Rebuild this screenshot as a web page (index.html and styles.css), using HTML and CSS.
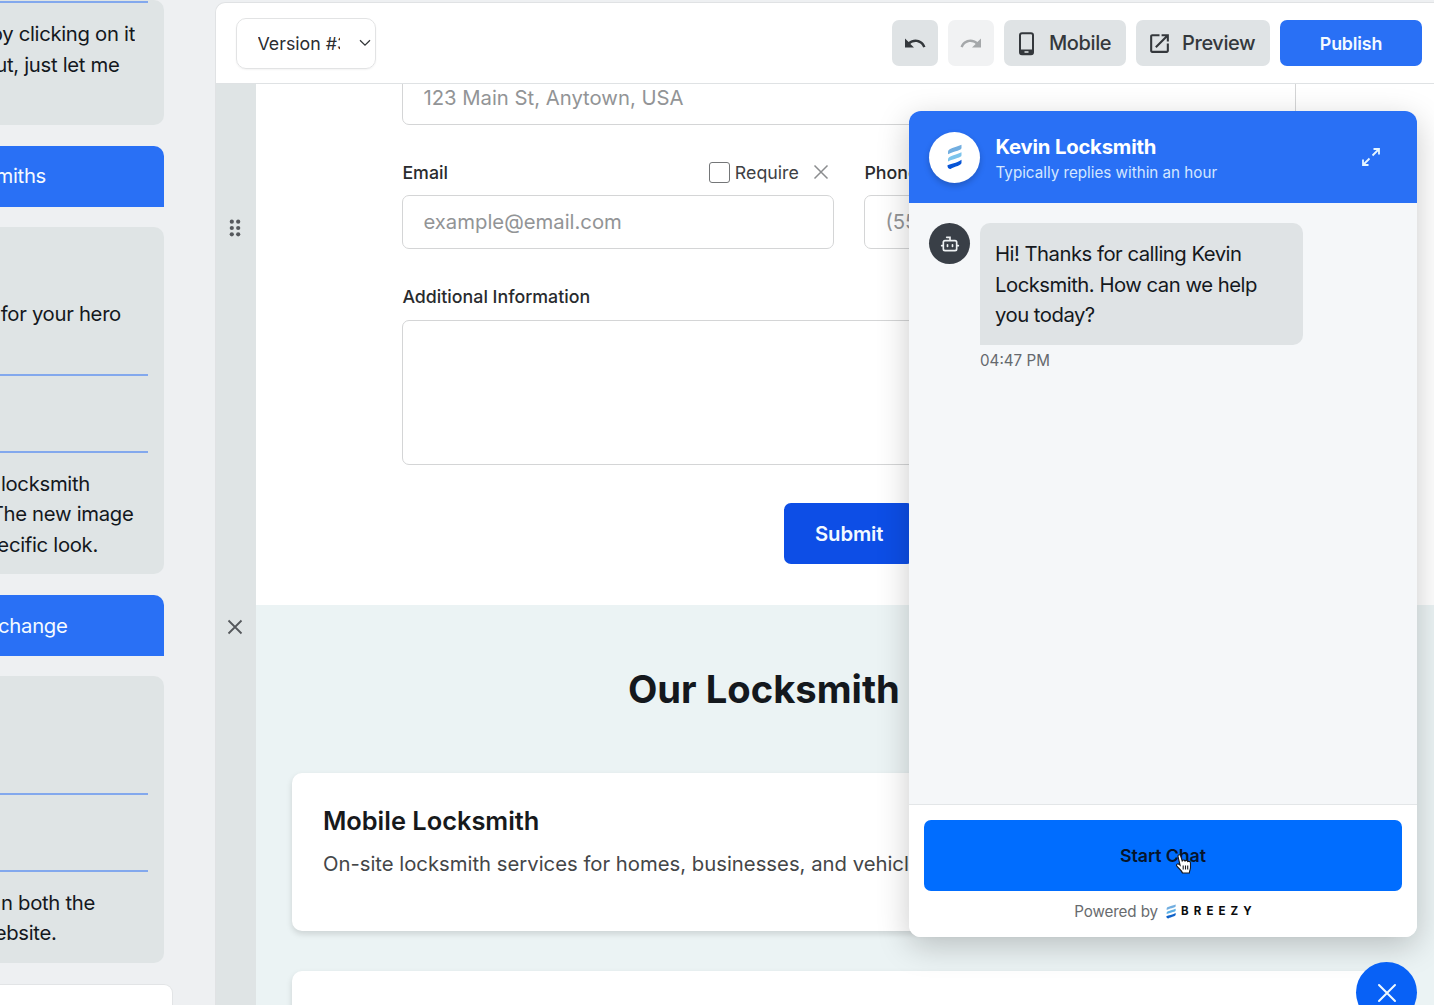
FILE: index.html
```html
<!DOCTYPE html>
<html lang="en">
<head>
<meta charset="utf-8">
<title>Website editor</title>
<link rel="stylesheet" href="styles.css">
</head>
<body>
<div class="app">
  <aside class="assistant">
    <div class="bubble bubble-a">
      <hr class="rule">
      <p class="lines"><span class="line w-135">by clicking on it</span><span class="line w-120">ut, just let me</span></p>
    </div>
    <div class="prompt"><span class="line w-46">miths</span></div>
    <div class="bubble bubble-b">
      <p class="lines"><span class="line w-121">for your hero</span></p>
      <hr class="rule">
      <hr class="rule">
      <p class="lines"><span class="line w-90">locksmith</span><span class="line w-133">The new image</span><span class="line w-98">ecific look.</span></p>
    </div>
    <div class="prompt prompt-low"><span class="line w-67">change</span></div>
    <div class="bubble bubble-c">
      <hr class="rule">
      <hr class="rule">
      <p class="lines"><span class="line w-95">n both the</span><span class="line w-56">ebsite.</span></p>
    </div>
    <div class="composer"></div>
  </aside>

  <main class="editor">
    <header class="toolbar">
      <div class="version"><span class="version-name">Version #3</span>
        <svg class="chevron" viewBox="0 0 12 8"><path d="M1 1.2 6 6.2 11 1.2"/></svg>
      </div>
      <div class="actions">
        <button class="btn icon-only" aria-label="Undo"><svg class="fill" width="24" height="25" viewBox="0 0 24 24"><path d="M12.5 8c-2.65 0-5.05.99-6.9 2.6L2 7v9h9l-3.62-3.62c1.39-1.16 3.16-1.88 5.12-1.88 3.54 0 6.55 2.31 7.6 5.5l2.37-.78C21.08 11.03 17.15 8 12.5 8z"/></svg></button>
        <button class="btn icon-only disabled" aria-label="Redo"><svg class="fill" width="24" height="25" viewBox="0 0 24 24"><path d="M18.4 10.6C16.55 8.99 14.15 8 11.5 8c-4.65 0-8.58 3.03-9.96 7.22L3.9 16c1.05-3.19 4.05-5.5 7.6-5.5 1.95 0 3.73.72 5.12 1.88L13 16h9V7l-3.6 3.6z"/></svg></button>
        <button class="btn mobile"><svg width="25" height="25" viewBox="0 0 25 25"><rect class="phone" x="6" y="2.200" width="13" height="21" rx="2"/><path class="fill" d="M6 18.500h13V22a1.500 1.500 0 0 1-1.500 1.500h-10A1.500 1.500 0 0 1 6 22z"/><path class="phone-key" d="M10.500 21h4"/></svg>Mobile</button>
        <button class="btn preview"><svg class="fill" width="25" height="25" viewBox="0 0 24 24"><path d="M19 19H5V5h7V3H5c-1.110 0-2 .9-2 2v14c0 1.100.89 2 2 2h14c1.100 0 2-.9 2-2v-7h-2v7zM14 3v2h3.590l-9.830 9.830 1.410 1.410L19 6.410V10h2V3h-7z"/></svg>Preview</button>
        <button class="btn publish">Publish</button>
      </div>
    </header>

    <div class="workspace">
      <div class="rail">
        <svg class="grip" width="12" height="20" viewBox="0 0 12 20"><circle cx="2.800" cy="3.700" r="2.100"/><circle cx="9.200" cy="3.700" r="2.100"/><circle cx="2.800" cy="10" r="2.100"/><circle cx="9.200" cy="10" r="2.100"/><circle cx="2.800" cy="16.300" r="2.100"/><circle cx="9.200" cy="16.300" r="2.100"/></svg>
        <svg class="cross" width="16" height="16" viewBox="0 0 16 16"><path d="M1.500 1.500 14.500 14.500M14.500 1.500 1.500 14.500"/></svg>
      </div>
      <div class="page">
        <section class="form">
          <div class="input address">123 Main St, Anytown, USA</div>
          <div class="fields">
            <div class="field">
              <div class="label-row"><span class="label">Email</span>
                <span class="require"><i class="checkbox"></i>Require<svg class="remove" width="16" height="16" viewBox="0 0 16 16"><path d="M1.500 1.500 14.500 14.500M14.500 1.500 1.500 14.500"/></svg></span></div>
              <div class="input">example@email.com</div>
            </div>
            <div class="field">
              <div class="label-row"><span class="label">Phone</span></div>
              <div class="input">(555) 123-4567</div>
            </div>
          </div>
          <div class="label extra">Additional Information</div>
          <div class="textarea"></div>
          <button class="submit">Submit</button>
        </section>
        <section class="services">
          <h2>Our Locksmith</h2>
          <article class="card"><h3>Mobile Locksmith</h3><p>On-site locksmith services for homes, businesses, and vehicles</p></article>
          <article class="card"></article>
        </section>
      </div>
    </div>
  </main>

  <section class="chat">
    <header class="chat-head">
      <div class="avatar"><svg width="17" height="26" viewBox="0 0 17 26"><path fill="#72aee0" d="M2 8.200C2 4.500 6 4.800 15.500.8V4C15.500 6.500 10 6.500 2 10.300z"/><path fill="#7cc4ec" d="M2 15.800C2 12 7 12 15.500 8.300V11.300C15.500 14 9 14 2 17.500z"/><path fill="#0754d6" d="M1.500 21.300C5 19.800 10 19.300 15.500 15.800V18.800C15.500 21.500 9 22.500 4.500 25 2.500 25 1.300 23.500 1.500 21.300z"/></svg></div>
      <div class="who"><strong>Kevin Locksmith</strong><span>Typically replies within an hour</span></div>
      <svg class="expand" width="20" height="20" viewBox="0 0 20 20"><path d="M12.500 2H18V7.500M18 2 11.500 8.500M7.500 18H2V12.500M2 18 8.500 11.500"/></svg>
    </header>
    <div class="chat-body">
      <div class="bot"><svg width="20" height="20" viewBox="0 0 24 24"><path d="M12 8V4H8M6 8h12a2 2 0 0 1 2 2v8a2 2 0 0 1-2 2H6a2 2 0 0 1-2-2v-8a2 2 0 0 1 2-2zM2 14h2M20 14h2M15 13v2M9 13v2"/></svg></div>
      <div class="message"><p>Hi! Thanks for calling Kevin Locksmith. How can we help you today?</p><time>04:47 PM</time></div>
    </div>
    <footer class="chat-foot">
      <button class="start">Start Chat</button>
      <div class="powered"><span>Powered by</span><svg width="10" height="15" viewBox="1 0 15 26" preserveAspectRatio="none"><path fill="#72aee0" d="M2 8.200C2 4.500 6 4.800 15.500.8V4C15.500 6.500 10 6.500 2 10.300z"/><path fill="#5aafe5" d="M2 15.800C2 12 7 12 15.500 8.300V11.300C15.500 14 9 14 2 17.500z"/><path fill="#0f62c9" d="M1.500 21.300C5 19.800 10 19.300 15.500 15.800V18.800C15.500 21.500 9 22.500 4.500 25 2.500 25 1.300 23.500 1.500 21.300z"/></svg><b>BREEZY</b></div>
    </footer>
  </section>
  <div class="launcher"><svg width="20" height="20" viewBox="0 0 20 20"><path d="M2 2 18 18M18 2 2 18"/></svg></div>
  <svg class="pointer" width="18" height="22" viewBox="0 0 18 22"><path d="M5 12 3 3.500C2.700 1.500 5.200 1 5.700 3L7.200 8C8 6.700 9.500 6.800 10 8 11 7 12.400 7.400 12.700 8.600 14 8 15.500 8.600 15.500 10.200V14.500C15.500 16.500 14.500 17.500 14.300 20H7.500C6.500 17 2.500 14.500 1.500 12.500 1.200 10.800 3.200 10.200 5 12z"/><path d="M8.200 12.500v4M10.500 12.500v4M12.700 12.500v4"/></svg>
</div>
</body>
</html>
```
FILE: styles.css
```css
* { box-sizing: border-box; }
body { margin: 0; font-family: Inter, "Liberation Sans", sans-serif; color: #14181d; }
h2, h3, p { margin: 0; }
button { font: inherit; border: 0; padding: 0; }
svg { display: block; flex: none; }
.app { position: relative; width: 1434px; height: 1005px; overflow: hidden; display: flex; background: #eef0f2; }

.assistant { width: 215px; flex: none; overflow: hidden; font-size: 20.3px; line-height: 30.5px; letter-spacing: -.3px; }
.bubble, .prompt { width: 163.5px; }
.bubble { background: #dfe4e5; border-radius: 0 10px 10px 0; display: flow-root; }
.bubble-a { height: 125px; margin-bottom: 20.5px; }
.bubble-b { height: 347px; margin: 20.5px 0 21px; }
.bubble-c { height: 287px; margin: 20px 0 21px; }
.prompt { height: 61px; display: flex; align-items: center; background: #2970f5; color: #f5faff; border-radius: 0 10px 0 0; }
.prompt-low { padding-top: 2px; }
.rule { height: 2px; width: 148px; margin: 0; border: 0; background: #83a8ed; }
.line { display: flex; justify-content: flex-end; overflow: hidden; white-space: nowrap; }
.w-135 { width: 135px; } .w-120 { width: 119.5px; } .w-121 { width: 121px; } .w-46 { width: 46px; } .w-90 { width: 90px; }
.w-133 { width: 133.5px; } .w-98 { width: 98px; } .w-67 { width: 67.5px; } .w-95 { width: 95px; } .w-56 { width: 56.5px; }
.bubble-a .rule { margin-top: 1px; }
.bubble-a .lines { margin-top: 16px; }
.bubble-b .lines:first-child { margin-top: 72px; }
.bubble-b .rule { margin-top: 44px; }
.bubble-b .rule + .rule { margin-top: 75px; }
.bubble-b .rule + .lines { margin-top: 16px; }
.bubble-c .rule { margin-top: 117px; }
.bubble-c .rule + .rule { margin-top: 75px; }
.bubble-c .lines { margin-top: 15.5px; }
.composer { width: 173px; height: 40px; background: #fff; border: 1px solid #e2e4e6; border-left: 0; border-radius: 0 9px 0 0; }

.editor { flex: 1; min-width: 0; margin-top: 2px; border: 1px solid #e0e2e4; border-width: 1px 0 0 1px; border-radius: 10px 0 0 0; background: #fff; overflow: hidden; }
.toolbar { height: 81px; padding: 0 12px 0 20px; display: flex; justify-content: space-between; align-items: center; border-bottom: 1px solid #dfe2e4; }
.version { width: 140px; height: 51px; padding: 0 4px 0 20.5px; display: flex; align-items: center; justify-content: space-between; border: 1px solid #e2e3e4; border-radius: 10px; font-size: 17.8px; color: #2b2d30; box-shadow: 0 1px 2px #0000000d; }
.version-name { width: 82px; overflow: hidden; white-space: nowrap; }
.chevron { width: 12px; height: 8px; fill: none; stroke: #34373a; stroke-width: 1.3; }
.actions { display: flex; gap: 10px; }
.btn { height: 46px; display: flex; align-items: center; border-radius: 7px; background: #dfe3e5; color: #34383c; font-size: 20px; font-weight: 500; letter-spacing: -.4px; }
.fill { fill: currentColor; }
.phone { fill: none; stroke: currentColor; stroke-width: 2; }
.phone-key { stroke: #dfe3e5; stroke-width: 1.3; }
.icon-only { width: 46px; justify-content: center; }
.disabled { background: #f1f2f3; color: #a5a8aa; }
.mobile { width: 122px; padding-left: 10px; gap: 10px; }
.preview { width: 134px; padding-left: 10.5px; gap: 10.5px; }
.publish { width: 142px; justify-content: center; background: #2970f5; color: #f4faff; font-size: 17.8px; font-weight: 600; letter-spacing: -.15px; }

.workspace { display: flex; height: 921px; }
.rail { width: 40.4px; flex: none; display: flex; flex-direction: column; align-items: flex-start; background: #dfe4e5; }
.grip { margin: 134px 0 0 13px; fill: #55585c; }
.cross { margin: 381px 0 0 11px; fill: none; stroke: #55585c; stroke-width: 1.8; }
.page { flex: 1; min-width: 0; }
.form { height: 521px; padding: 0 138px 0 146px; display: flex; flex-direction: column; overflow: hidden; }
.input { height: 53.5px; flex: none; padding: 0 20px 1px; display: flex; align-items: center; border: 1px solid #d4d5d6; border-radius: 7px; font-size: 20.3px; color: #929496; white-space: nowrap; overflow: hidden; }
.address { margin-top: -13px; }
.fields { display: grid; grid-template-columns: 431.5px 431.5px; gap: 30.5px; margin-top: 32.5px; }
.label-row { height: 30px; margin-bottom: 8px; display: flex; align-items: center; justify-content: space-between; }
.label { font-size: 17.8px; font-weight: 500; color: #292b2e; }
.require { display: flex; align-items: center; padding-right: 5px; font-size: 17.8px; color: #3e4144; }
.checkbox { width: 21px; height: 21px; margin-right: 5px; border: 1px solid #747678; border-radius: 3px; }
.remove { margin-left: 14px; margin-top: -1px; fill: none; stroke: #8b8d8f; stroke-width: 1.5; }
.extra { line-height: 24px; margin: 36px 0 11px; }
.textarea { height: 145px; flex: none; border: 1px solid #d4d5d6; border-radius: 7px; }
.submit { width: 130px; height: 61px; flex: none; margin-top: 38.5px; align-self: center; background: #0d4ee6; color: #f2faff; font-size: 20.3px; font-weight: 600; border-radius: 7px; letter-spacing: -.1px; }
.services { height: 400px; padding: 0 36px; background: #ebf3f4; overflow: hidden; }
.services h2 { padding: 60px 0 59px 335.5px; font-size: 38.2px; line-height: 49px; font-weight: 700; white-space: nowrap; }
.card { height: 158px; padding: 31px 30.5px; margin-bottom: 40px; background: #fff; border-radius: 10px; box-shadow: 0 3px 6px #00000022; white-space: nowrap; }
.card h3 { font-size: 25.4px; line-height: 33px; font-weight: 600; color: #17191b; }
.card p { margin-top: 12px; font-size: 20.3px; line-height: 30px; color: #444648; }

.chat { position: absolute; left: 909px; top: 111px; width: 508px; height: 826px; display: flex; flex-direction: column; overflow: hidden; border-radius: 12px; background: #fff; box-shadow: 0 9px 32px #00000036; }
.chat-head { height: 92px; flex: none; padding: 0 36px 0 20px; display: flex; align-items: center; background: #2970f5; color: #fff; }
.avatar { width: 51px; height: 51px; display: grid; place-items: center; border-radius: 50%; background: #fff; box-shadow: 0 3px 6px #0003; }
.who { flex: 1; margin-left: 15.5px; display: flex; flex-direction: column; padding-top: 3px; }
.who strong { font-size: 20.3px; line-height: 27px; font-weight: 700; letter-spacing: -.2px; }
.who span { font-size: 15.2px; line-height: 25px; color: #d3e6ff; }
.expand { fill: none; stroke: #e6f6ff; stroke-width: 1.8; }
.chat-body { flex: 1; padding: 20px; display: flex; gap: 10px; background: #f5f7f9; }
.bot { width: 41px; height: 41px; display: grid; place-items: center; border-radius: 50%; background: #393f47; }
.bot svg { fill: none; stroke: #eef2f4; stroke-width: 2; stroke-linecap: round; }
.message p { width: 323px; height: 122px; padding: 16px 15px; border-radius: 10px 10px 10px 0; background: #dfe3e5; font-size: 20.3px; line-height: 30.5px; letter-spacing: -.5px; }
.message time { display: block; margin-top: 5px; font-size: 15.2px; line-height: 21px; color: #65696e; }
.chat-foot { height: 133px; flex: none; padding: 15px; border-top: 1px solid #e3e6e8; background: #fff; }
.start { width: 100%; height: 71px; display: block; border-radius: 7px; background: #006dff; color: #06152c; font-size: 17.8px; font-weight: 600; letter-spacing: -.1px; }
.powered { margin-top: 8px; display: flex; align-items: center; justify-content: center; height: 25px; font-size: 15.2px; letter-spacing: -.1px; color: #686b6e; }
.powered svg { margin: 0 5px 0 8px; }
.powered b { margin: -2px -5px 0 0; font-size: 11.5px; letter-spacing: 5.1px; color: #0b0c0e; }
.launcher { position: absolute; left: 1356px; top: 962px; width: 61px; height: 61px; display: grid; place-items: center; border-radius: 50%; background: #0861f6; }
.launcher svg { fill: none; stroke: #effaff; stroke-width: 2; stroke-linecap: round; }
.pointer { position: absolute; left: 1175px; top: 853px; fill: #fff; stroke: #171a20; stroke-width: 1.1; }
```
